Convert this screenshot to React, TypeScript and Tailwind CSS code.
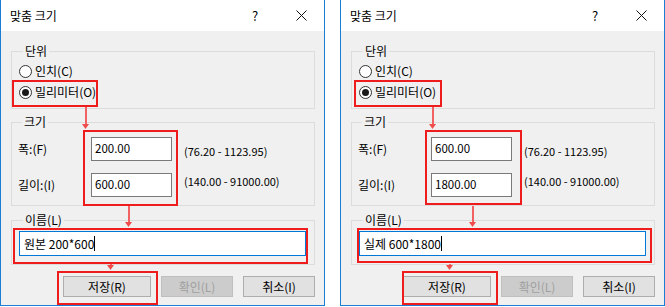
type Marks = {
  box1: string;
  arrow1: string;
  box2: string;
  arrow2: string;
  box3: string;
  arrow3: string;
  box4: string;
};

type DialogProps = {
  width: string;
  height: string;
  name: string;
  marks: Marks;
};

function Radio({ checked, label }: { checked?: boolean; label: string }) {
  return (
    <div className="flex items-center h-[16px]">
      <span className="w-[13px] h-[13px] rounded-full border border-[#333333] bg-white flex items-center justify-center">
        {checked && <span className="w-[7px] h-[7px] rounded-full bg-[#1a1a1a]" />}
      </span>
      <span className="ml-[3px]">{label}</span>
    </div>
  );
}

function Box({ pos }: { pos: string }) {
  return <div className={"absolute border-2 border-[#ee1c1c] pointer-events-none " + pos} />;
}

function Arrow({ pos }: { pos: string }) {
  return (
    <div className={"absolute w-[7px] flex flex-col items-center pointer-events-none " + pos}>
      <div className="flex-1 w-[2px] bg-[#f26262]" />
      <svg width="7" height="5" viewBox="0 0 7 5" className="shrink-0">
        <path d="M0 0 H7 L3.5 5 Z" fill="#f04c4c" />
      </svg>
    </div>
  );
}

function Dialog({ width, height, name, marks }: DialogProps) {
  return (
    <div className="relative w-[325px] h-[306px] border-x border-b border-[#1a7fd4] bg-[#f0f0f0] flex flex-col text-[12px] text-black">
      {/* title bar */}
      <div className="h-[31px] bg-white flex items-center pl-[9px]">
        <span className="flex-1">맞춤 크기</span>
        <span className="w-[46px] text-center text-[13px]">?</span>
        <span className="w-[46px] flex justify-center">
          <svg width="11" height="11" viewBox="0 0 11 11">
            <path d="M0.5 0.5 L10.5 10.5 M10.5 0.5 L0.5 10.5" stroke="#111" strokeWidth="1" />
          </svg>
        </span>
      </div>

      <div className="flex flex-col pl-[10px] pr-[9px]">
        <fieldset className="mt-[12px] border border-[#dcdcdc] pl-[7px] pb-[8px]">
          <legend className="ml-[4px] px-[2px] leading-[16px]">단위</legend>
          <div className="mt-[4px] flex flex-col gap-[5px]">
            <Radio label="인치(C)" />
            <Radio checked label="밀리미터(O)" />
          </div>
        </fieldset>

        <fieldset className="mt-[5px] border border-[#dcdcdc] pl-[6px] pb-[8px]">
          <legend className="ml-[4px] px-[2px] leading-[16px]">크기</legend>
          <div className="mt-[7px] grid grid-cols-[61px_81px_auto] gap-x-[12px] gap-y-[12px] items-center">
            <span>폭:(F)</span>
            <div className="h-[24px] border border-[#7a7a7a] bg-white flex items-center pl-[3px] text-[11.5px]">{width}</div>
            <span className="mt-[5px] text-[11px]">(76.20 - 1123.95)</span>
            <span>길이:(I)</span>
            <div className="h-[24px] border border-[#7a7a7a] bg-white flex items-center pl-[3px] text-[11.5px]">{height}</div>
            <span className="-mt-[7px] text-[11px]">(140.00 - 91000.00)</span>
          </div>
        </fieldset>

        <fieldset className="mt-[6px] border border-[#dcdcdc] pl-[7px] pr-[8px] pb-[8px]">
          <legend className="ml-[4px] px-[2px] leading-[16px]">이름(L)</legend>
          <div className="mt-[3px] h-[25px] border border-[#0078d7] bg-white flex items-center pl-[4px]">
            <span>{name}</span>
            <span className="w-px h-[15px] bg-black" />
          </div>
        </fieldset>

        <div className="mt-[11px] flex justify-end gap-[10px]">
          <button className="w-[88px] h-[21px] border border-[#adadad] bg-[#e1e1e1] leading-none">저장(R)</button>
          <button className="w-[72px] h-[21px] border border-[#bfbfbf] bg-[#cccccc] text-[#a0a0a0] leading-none">확인(L)</button>
          <button className="w-[72px] h-[21px] border border-[#adadad] bg-[#e1e1e1] leading-none">취소(I)</button>
        </div>
      </div>

      <Box pos={marks.box1} />
      <Arrow pos={marks.arrow1} />
      <Box pos={marks.box2} />
      <Arrow pos={marks.arrow2} />
      <Box pos={marks.box3} />
      <Arrow pos={marks.arrow3} />
      <Box pos={marks.box4} />
    </div>
  );
}

export default function App() {
  return (
    <div className="w-[665px] h-[307px] bg-white flex gap-[15px] font-['Noto_Sans_CJK_KR','Noto_Sans',sans-serif]">
      <Dialog
        width="200.00"
        height="600.00"
        name="원본 200*600"
        marks={{
          box1: "left-[11px] top-[80px] w-[86px] h-[27px]",
          arrow1: "left-[81px] top-[107px] h-[22px]",
          box2: "left-[82px] top-[130px] w-[95px] h-[76px]",
          arrow2: "left-[124px] top-[206px] h-[21px]",
          box3: "left-[12px] top-[228px] w-[295px] h-[36px]",
          arrow3: "left-[106px] top-[264px] h-[6px]",
          box4: "left-[56px] top-[271px] w-[101px] h-[34px]",
        }}
      />
      <Dialog
        width="600.00"
        height="1800.00"
        name="실제 600*1800"
        marks={{
          box1: "left-[13px] top-[80px] w-[88px] h-[27px]",
          arrow1: "left-[88px] top-[107px] h-[22px]",
          box2: "left-[84px] top-[130px] w-[97px] h-[75px]",
          arrow2: "left-[128px] top-[206px] h-[21px]",
          box3: "left-[16px] top-[228px] w-[295px] h-[35px]",
          arrow3: "left-[105px] top-[264px] h-[6px]",
          box4: "left-[61px] top-[271px] w-[96px] h-[34px]",
        }}
      />
    </div>
  );
}
